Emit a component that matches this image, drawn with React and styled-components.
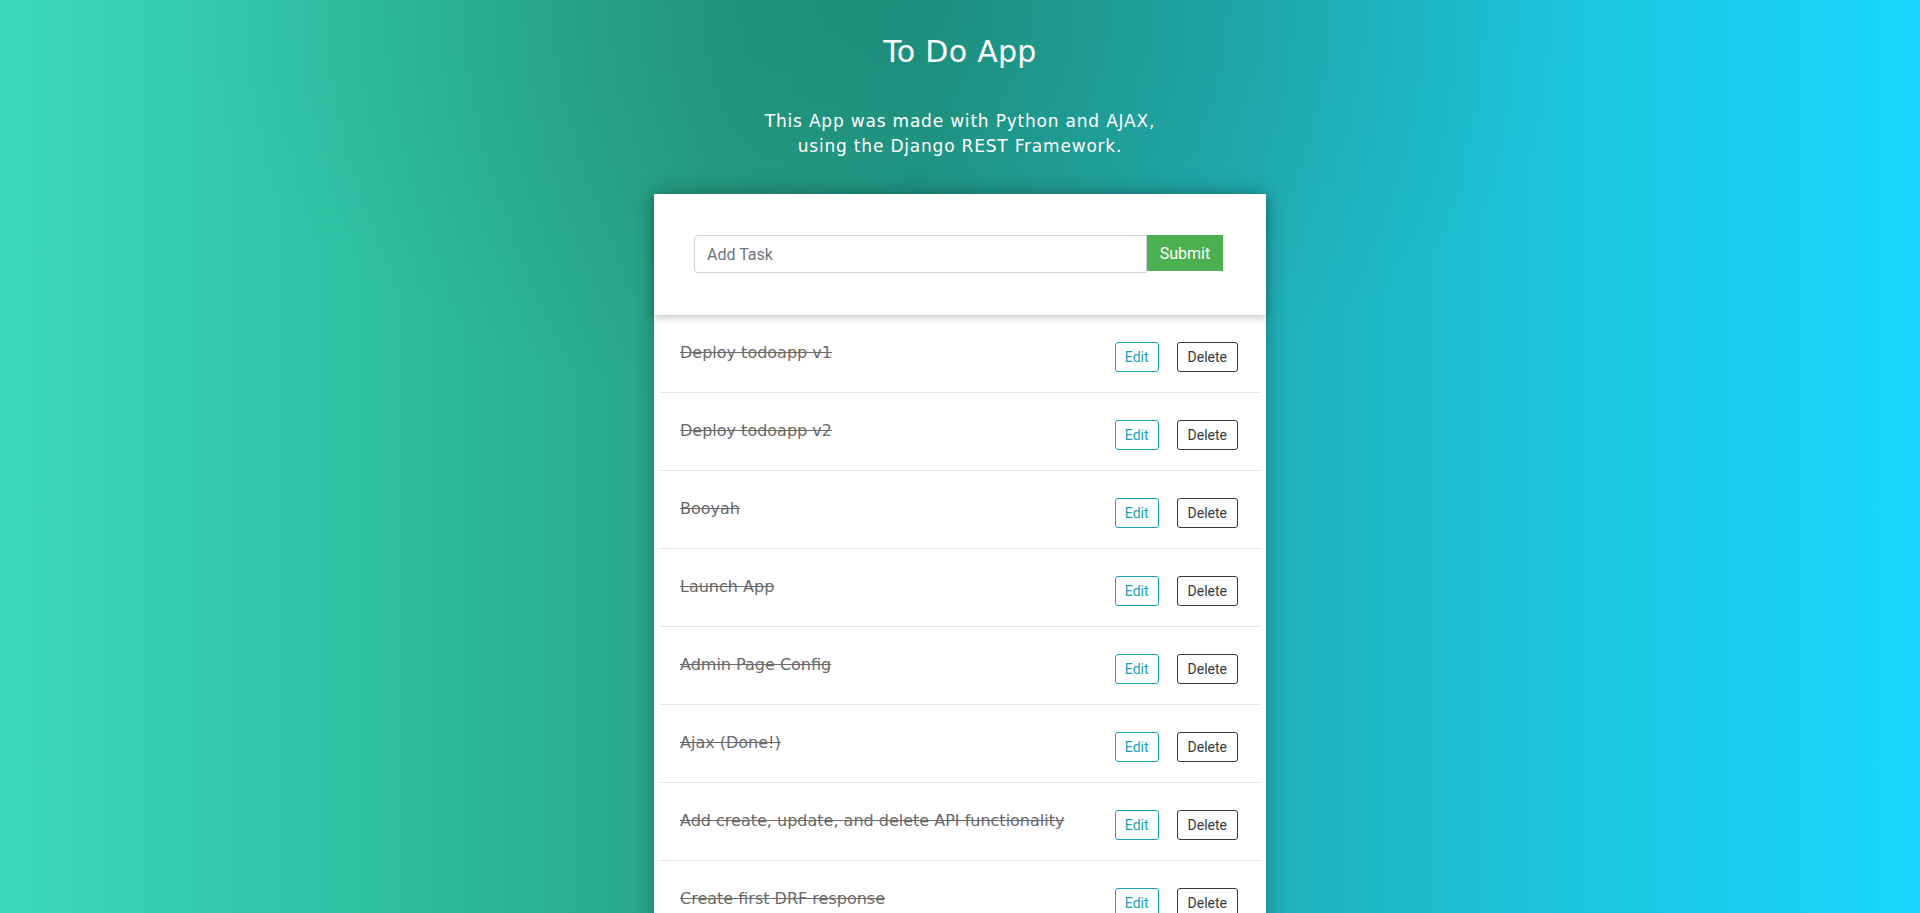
import React from 'react'
import styled, { createGlobalStyle } from 'styled-components'

const GlobalStyle = createGlobalStyle`
  html, body {
    margin: 0;
    padding: 0;
  }
  body {
    font-family: "DejaVu Sans", "Open Sans", sans-serif;
  }
  * {
    box-sizing: border-box;
  }
`

const Page = styled.div`
  min-height: 100vh;
  padding-top: 34px;
  background:
    radial-gradient(ellipse 700px 420px at 46% 0%, rgba(18, 100, 80, 0.28), rgba(18, 100, 80, 0) 100%),
    linear-gradient(90deg, #3dd8ba 0%, #2fbfa1 20%, #27a086 38%, #229d8c 48%, #21afb4 64%, #1dc6df 82%, #18d6fd 100%);
  background-attachment: fixed;
`

const Title = styled.h1`
  margin: 0;
  text-align: center;
  color: #ffffff;
  font-family: "DejaVu Sans", "Open Sans", sans-serif;
  font-weight: 400;
  font-size: 30px;
  line-height: 36px;
  letter-spacing: 0.3px;
`

const Subtitle = styled.p`
  margin: 39px 0 0;
  text-align: center;
  color: #ffffff;
  font-size: 17px;
  line-height: 25px;
  letter-spacing: 0.8px;
`

const Card = styled.div`
  width: 612px;
  margin: 35px auto 0;
  background: #ffffff;
  box-shadow: 0 0 20px rgba(0, 0, 0, 0.3);
`

const FormHeader = styled.div`
  position: relative;
  z-index: 1;
  padding: 41px 43px 42px 40px;
  background: #ffffff;
  box-shadow: 0 3px 7px rgba(0, 0, 0, 0.22);
`

const Form = styled.form`
  display: flex;
  align-items: flex-start;
  margin: 0;
`

const TaskInput = styled.input`
  flex: 1;
  height: 38px;
  padding: 6px 12px;
  border: 1px solid #ced4da;
  border-radius: 4px 0 0 4px;
  font-family: Roboto, "Liberation Sans", sans-serif;
  font-size: 16px;
  color: #495057;
  outline: none;
  &::placeholder {
    color: #6c757d;
  }
`

const SubmitButton = styled.button`
  width: 76px;
  height: 36px;
  border: none;
  background: #4caf50;
  color: #ffffff;
  font-family: Roboto, "Liberation Sans", sans-serif;
  font-size: 16px;
  cursor: pointer;
`

const List = styled.div`
  padding: 0 5px;
`

const TaskRow = styled.div`
  display: flex;
  align-items: flex-start;
  height: 78px;
  padding: 26px 23px 0 21px;
  border-bottom: 1px solid #e8e8e8;
`

const TaskTitle = styled.span`
  flex: 1;
  color: #6a6a6a;
  font-size: 16px;
  line-height: 24px;
  text-decoration: ${(props) => (props.done ? 'line-through' : 'none')};
`

const Actions = styled.div`
  display: flex;
  gap: 18px;
  padding-top: 1px;
`

const SmallButton = styled.button`
  height: 30px;
  padding: 0 ${(props) => props.pad}px;
  border: 1px solid ${(props) => props.color};
  border-radius: 3px;
  background: transparent;
  color: ${(props) => props.color};
  font-family: Roboto, "Liberation Sans", sans-serif;
  font-size: 14px;
  line-height: 28px;
  cursor: pointer;
`

const tasks = [
  'Deploy todoapp v1',
  'Deploy todoapp v2',
  'Booyah',
  'Launch App',
  'Admin Page Config',
  'Ajax (Done!)',
  'Add create, update, and delete API functionality',
  'Create first DRF response',
]

function App() {
  return (
    <Page>
      <GlobalStyle />
      <Title>To Do App</Title>
      <Subtitle>
        This App was made with Python and AJAX,
        <br />
        using the Django REST Framework.
      </Subtitle>
      <Card>
        <FormHeader>
          <Form onSubmit={(e) => e.preventDefault()}>
            <TaskInput placeholder="Add Task" />
            <SubmitButton type="submit">Submit</SubmitButton>
          </Form>
        </FormHeader>
        <List>
          {tasks.map((task) => (
            <TaskRow key={task}>
              <TaskTitle done>{task}</TaskTitle>
              <Actions>
                <SmallButton color="#17a2b8" pad={9}>Edit</SmallButton>
                <SmallButton color="#343a40" pad={10}>Delete</SmallButton>
              </Actions>
            </TaskRow>
          ))}
        </List>
      </Card>
    </Page>
  )
}

export default App
